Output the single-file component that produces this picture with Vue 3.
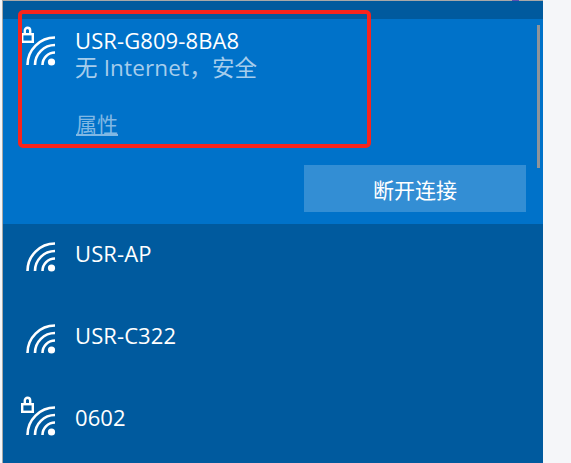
<template>
  <div class="screen">
    <div class="panel">
      <div class="top-strip"></div>
      <div class="selected">
        <div class="net-row">
          <svg class="wifi" width="44" height="44" viewBox="0 0 44 44" fill="none">
            <rect x="4.200" y="10.200" width="10.600" height="7.600" stroke="#fff" stroke-width="2.400"/>
            <path d="M6.800 10V6.500a2.700 2.700 0 0 1 5.400 0V10" stroke="#fff" stroke-width="2.400"/>
            <path d="M9.500 41A27.500 27.500 0 0 1 37 13.500M17 41A20 20 0 0 1 37 21M24.500 41A12.500 12.500 0 0 1 37 28.500" stroke="#fff" stroke-width="2.600"/>
            <circle cx="33.500" cy="38" r="3.600" fill="#fff"/>
          </svg>
          <div class="net-text">
            <div class="net-name">USR-G809-8BA8</div>
            <div class="net-status">无 Internet，安全</div>
            <a class="net-props">属性</a>
          </div>
        </div>
        <div class="actions">
          <button class="disconnect">断开连接</button>
        </div>
        <div class="scrollbar"></div>
      </div>
      <div v-for="n in networks" :key="n.name" class="net-row plain">
        <svg class="wifi" width="44" height="44" viewBox="0 0 44 44" fill="none">
          <template v-if="n.locked">
            <rect x="4.200" y="10.200" width="10.600" height="7.600" stroke="#fff" stroke-width="2.400"/>
            <path d="M6.800 10V6.500a2.700 2.700 0 0 1 5.400 0V10" stroke="#fff" stroke-width="2.400"/>
          </template>
          <path d="M9.500 41A27.500 27.500 0 0 1 37 13.500M17 41A20 20 0 0 1 37 21M24.500 41A12.500 12.500 0 0 1 37 28.500" stroke="#fff" stroke-width="2.600"/>
          <circle cx="33.500" cy="38" r="3.600" fill="#fff"/>
        </svg>
        <div class="net-name">{{ n.name }}</div>
      </div>
    </div>
    <div class="top-tick"></div>
    <div class="highlight"></div>
  </div>
</template>

<script setup>
const networks = [
  { name: 'USR-AP', locked: false },
  { name: 'USR-C322', locked: false },
  { name: '0602', locked: true }
]
</script>

<style>
body {
  margin: 0;
  background: #f5f6f9;
}
</style>

<style scoped>
.screen {
  position: relative;
  width: 571px;
  height: 463px;
  overflow: hidden;
  background: #f5f6f9;
  font-family: "Open Sans", "Noto Sans CJK SC", sans-serif;
}

.panel {
  width: 540px;
  height: 462px;
  margin-left: 2px;
  border-top: 1px solid #a8a8a8;
  border-left: 1px solid #a8a8a8;
  background: #005a9e;
  overflow: hidden;
}

.top-strip {
  height: 18px;
}

.top-tick {
  position: absolute;
  left: 512px;
  top: 0;
  width: 7px;
  height: 1px;
  background: #5a4fb0;
}

.selected {
  position: relative;
  height: 205px;
  background: #0072c9;
}

.net-row {
  display: flex;
  padding-left: 15px;
  gap: 13px;
  color: #fff;
}

.net-row.plain {
  height: 60px;
  margin-bottom: 22px;
  align-items: center;
}

.wifi {
  flex-shrink: 0;
  margin-top: 5px;
}

.net-row.plain .wifi {
  margin-top: 0;
  margin-bottom: 4px;
}

.net-row.plain .net-name {
  margin-bottom: 2px;
}

.net-name {
  font-size: 22px;
  line-height: 28px;
  letter-spacing: 0.1px;
}

.net-text {
  padding-top: 7px;
}

.net-status {
  font-size: 22.500px;
  line-height: 28px;
  letter-spacing: 0.15px;
  color: #a6cdec;
}

.net-props {
  display: block;
  width: fit-content;
  margin: 28px 0 0 1px;
  font-size: 21px;
  line-height: 28px;
  color: #80b8e4;
  text-decoration: underline;
}

.actions {
  display: flex;
  justify-content: flex-end;
  padding: 27px 17px 0 0;
}

.disconnect {
  width: 222px;
  height: 47px;
  padding: 0;
  border: none;
  background: #338ed4;
  color: #fff;
  font: inherit;
  font-size: 21px;
}

.scrollbar {
  position: absolute;
  top: 6px;
  right: 3px;
  width: 3px;
  height: 143px;
  background: #8f9499;
}

.highlight {
  position: absolute;
  left: 18px;
  top: 10px;
  width: 345px;
  height: 130px;
  border: 4px solid #f7241c;
  border-radius: 5px;
}
</style>
